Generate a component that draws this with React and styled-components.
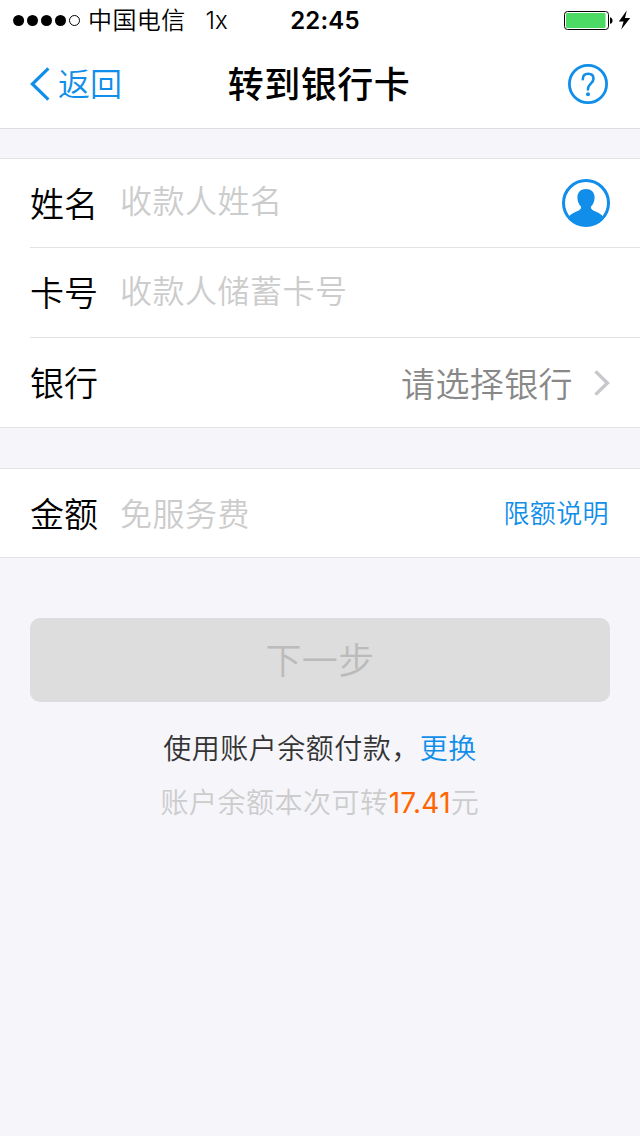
import React from "react";
import styled, { createGlobalStyle } from "styled-components";

const App = () => {
  return (
    <MainContainer>
      <GlobalStyle />
      <StatusBar>
        <StatusLeft>
          <SignalIcon />
          <Carrier>中国电信</Carrier>
          <Network>1x</Network>
        </StatusLeft>
        <Clock>22:45</Clock>
        <StatusRight>
          <BatteryIcon />
        </StatusRight>
      </StatusBar>

      <NavBar>
        <BackButton>
          <BackIcon />
          <BackText>返回</BackText>
        </BackButton>
        <NavTitle>转到银行卡</NavTitle>
        <HelpButton>
          <HelpIcon />
        </HelpButton>
      </NavBar>

      <FormGroup $top={29}>
        <FormRow>
          <Label>姓名</Label>
          <Placeholder>收款人姓名</Placeholder>
          <ContactIcon />
        </FormRow>
        <FormRow>
          <Label>卡号</Label>
          <Placeholder>收款人储蓄卡号</Placeholder>
        </FormRow>
        <FormRow>
          <Label>银行</Label>
          <SelectText>请选择银行</SelectText>
          <ArrowIcon />
        </FormRow>
      </FormGroup>

      <FormGroup $top={40}>
        <FormRow>
          <Label>金额</Label>
          <Placeholder $drop={4}>免服务费</Placeholder>
          <LimitLink>限额说明</LimitLink>
        </FormRow>
      </FormGroup>

      <NextButton>下一步</NextButton>

      <PayText>
        使用账户余额付款，<ChangeLink>更换</ChangeLink>
      </PayText>
      <BalanceText>
        账户余额本次可转<Amount>17.41</Amount>元
      </BalanceText>
    </MainContainer>
  );
};

const SignalIcon = () => (
  <svg width="68" height="12" viewBox="0 0 68 12">
    <circle cx="5.6" cy="6.5" r="5.5" />
    <circle cx="19.5" cy="6.5" r="5.5" />
    <circle cx="33.5" cy="6.5" r="5.5" />
    <circle cx="47.5" cy="6.5" r="5.5" />
    <circle cx="61.5" cy="6.5" r="5" fill="none" stroke="#000" strokeWidth="1" />
  </svg>
);

const BatteryIcon = () => (
  <svg width="68" height="22" viewBox="0 0 68 22">
    <rect x="0.5" y="2.5" width="44" height="18" rx="3" fill="#fff" stroke="#000" />
    <rect x="2" y="4" width="39.5" height="15" rx="1.2" fill="#4cd964" />
    <path d="M46 8.2C49.4 8.8 49.4 14.2 46 14.8Z" />
    <path d="M62.8 1.4L54.8 12.4H59.6L57.2 20.6L66.2 9H61Z" />
  </svg>
);

const BackIcon = () => (
  <svg width="20" height="34" viewBox="0 0 20 34">
    <path d="M18.4 1.4L2.4 17L18.4 32.6" fill="none" stroke="#108ee9" strokeWidth="3.2" />
  </svg>
);

const HelpIcon = () => (
  <svg width="40" height="40" viewBox="0 0 40 40">
    <circle cx="20" cy="20" r="18.6" fill="none" stroke="#108ee9" strokeWidth="2.8" />
    <path
      d="M14.8 15.2C14.8 11.7 16.8 9.7 20.2 9.7C23.6 9.7 25.5 11.7 25.5 14.7C25.5 19.4 19.9 19.4 19.9 25.4"
      fill="none"
      stroke="#108ee9"
      strokeWidth="2.6"
      strokeLinecap="round"
    />
    <circle cx="20" cy="30.2" r="2" fill="#108ee9" />
  </svg>
);

const ContactIcon = () => (
  <svg width="48" height="48" viewBox="0 0 48 48">
    <circle cx="24" cy="24" r="22.5" fill="#fff" stroke="#108ee9" strokeWidth="3" />
    <path
      d="M24 10C18.8 10 15.4 13.4 15.4 18.4C15.4 22.4 17 25.6 19 27.6C19.4 29.4 18.6 30.6 16.8 31.4C12.6 33 9.6 34.4 7 37.2C11 43.4 17 46.6 24 46.6C31 46.6 37 43.4 41 37.2C38.4 34.4 35.4 33 31.2 31.4C29.4 30.6 28.6 29.4 29 27.6C31 25.6 32.6 22.4 32.6 18.4C32.6 13.4 29.2 10 24 10Z"
      fill="#108ee9"
    />
  </svg>
);

const ArrowIcon = () => (
  <svg width="16" height="26" viewBox="0 0 16 26">
    <path d="M1.5 1.4L13.4 13L1.5 24.6" fill="none" stroke="#c7c7cc" strokeWidth="3.4" />
  </svg>
);

export default App;

const GlobalStyle = createGlobalStyle`
  body {
    margin: 0;
    background: #f5f5fa;
    font-family: "Inter", "Noto Sans CJK SC", sans-serif;
    font-weight: 350;
  }
`;

const MainContainer = styled.div`
  width: 640px;
  height: 1136px;
  background: #f5f5fa;
  overflow: hidden;
`;

const StatusBar = styled.div`
  height: 40px;
  display: grid;
  grid-template-columns: 1fr auto 1fr;
  grid-template-rows: 40px;
  align-items: center;
  padding: 0 8px 0 13px;
  background: #fff;
  color: #000;
`;
const StatusLeft = styled.div`
  display: flex;
  align-items: center;
  font-size: 24px;
  line-height: 38px;
`;
const Carrier = styled.span`
  margin-left: 7px;
  padding-top: 2px;
  letter-spacing: 0.4px;
`;
const Network = styled.span`
  margin-left: 20px;
  padding-top: 2px;
  font-size: 24px;
`;
const Clock = styled.span`
  padding: 2px 0 0 5px;
  font-size: 24px;
  font-weight: 600;
  line-height: 38px;
  letter-spacing: 0.2px;
`;
const StatusRight = styled.div`
  display: flex;
  justify-content: flex-end;
`;

const NavBar = styled.div`
  height: 88px;
  display: grid;
  grid-template-columns: 1fr auto 1fr;
  align-items: center;
  padding: 0 32px 0 30px;
  background: #fff;
  border-bottom: 1px solid #dddde0;
`;
const BackButton = styled.div`
  display: flex;
  align-items: center;
  color: #108ee9;
`;
const BackText = styled.span`
  margin-left: 8px;
  padding-top: 2px;
  font-size: 32px;
  line-height: 48px;
`;
const NavTitle = styled.span`
  padding-top: 2px;
  font-size: 36px;
  font-weight: 500;
  line-height: 54px;
  letter-spacing: 0.5px;
  color: #000;
`;
const HelpButton = styled.div`
  display: flex;
  justify-content: flex-end;
`;

const FormGroup = styled.div`
  margin-top: ${({ $top }) => $top}px;
  padding-left: 30px;
  background: #fff;
  border-top: 1px solid #e2e2e5;
  border-bottom: 1px solid #e2e2e5;
`;
const FormRow = styled.div`
  height: 88px;
  display: flex;
  align-items: center;
  padding-right: 30px;

  & + & {
    height: 89px;
    border-top: 1px solid #e2e2e5;
  }
`;
const Label = styled.span`
  width: 90px;
  padding-top: 3px;
  font-size: 34px;
  line-height: 50px;
  color: #000;
`;
const Placeholder = styled.span`
  flex: 1;
  padding: ${({ $drop }) => ($drop ? `${$drop}px 0 0` : "0 0 2px")};
  font-size: 32px;
  line-height: 48px;
  letter-spacing: 0.5px;
  color: #ccc;
`;
const SelectText = styled.span`
  flex: 1;
  margin-right: 21px;
  padding-top: 4px;
  text-align: right;
  font-size: 34px;
  line-height: 50px;
  letter-spacing: 0.4px;
  color: #888;
`;
const LimitLink = styled.span`
  margin-right: 1px;
  padding-top: 2px;
  font-size: 26px;
  line-height: 40px;
  letter-spacing: 0.4px;
  color: #108ee9;
`;

const NextButton = styled.div`
  height: 84px;
  margin: 60px 30px 0;
  border-radius: 10px;
  background: #ddd;
  font-size: 36px;
  line-height: 86px;
  letter-spacing: 0.4px;
  text-align: center;
  color: #bbb;
`;

const PayText = styled.p`
  margin: 26px 0 0;
  font-size: 28px;
  line-height: 42px;
  letter-spacing: 0.5px;
  text-align: center;
  color: #333;
`;
const ChangeLink = styled.span`
  color: #108ee9;
`;
const BalanceText = styled.p`
  margin: 12px 0 0;
  font-size: 28px;
  line-height: 42px;
  letter-spacing: 0.5px;
  text-align: center;
  color: #ccc;
`;
const Amount = styled.span`
  font-weight: 400;
  letter-spacing: 0.3px;
  color: #ff6600;
`;
